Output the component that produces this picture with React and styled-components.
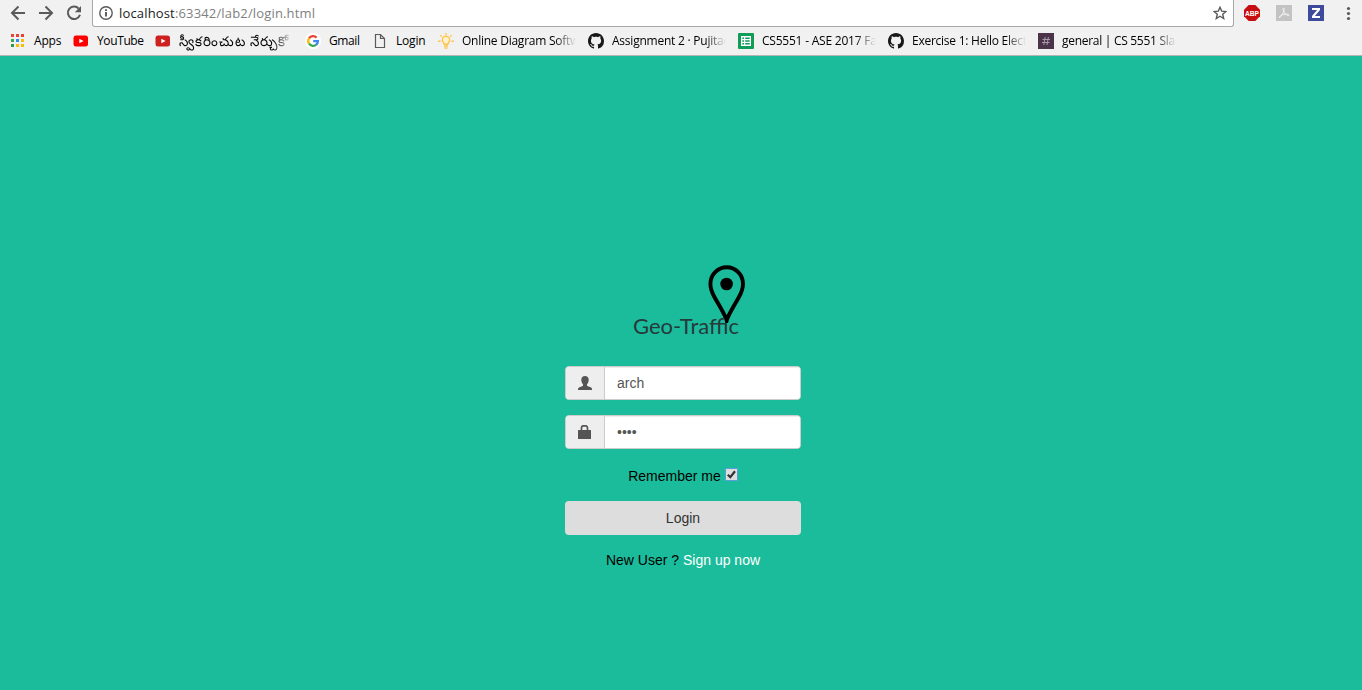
import React from 'react';
import styled, { createGlobalStyle } from 'styled-components';

const GlobalStyle = createGlobalStyle`
  *, *::before, *::after { box-sizing: border-box; }
  body { margin: 0; background: #1bbc9b; }
`;

const Window = styled.div`
  display: flex;
  flex-direction: column;
  height: 690px;
  overflow: hidden;
  font-family: "Liberation Sans", Arial, sans-serif;
`;

const Chrome = styled.header`
  display: flex;
  flex-direction: column;
  height: 56px;
  background: #f1f1f1;
  border-bottom: 1px solid #b3b5b4;
  font-family: "Open Sans", "Noto Sans", sans-serif;
`;

const Toolbar = styled.div`
  display: flex;
  height: 27px;
`;

const NavButtons = styled.div`
  display: flex;
  gap: 12px;
  width: 92px;
  padding: 5px 0 0 10px;
  svg { display: block; }
`;

const AddressBar = styled.div`
  display: flex;
  align-items: center;
  width: 1142px;
  height: 27px;
  padding: 0 6px;
  background: #fff;
  border: 1px solid #a9a9a9;
  border-top: 0;
  border-radius: 0 0 3px 3px;
`;

const Url = styled.span`
  flex: 1;
  margin-left: 6px;
  font-size: 13px;
  line-height: 18px;
  letter-spacing: 0.16px;
  color: #808080;
  b { font-weight: 400; color: #222; }
`;

const Extensions = styled.div`
  display: flex;
  gap: 16px;
  padding: 5px 0 0 10px;
  svg { display: block; }
`;

const BookmarkBar = styled.nav`
  display: flex;
  align-items: center;
  gap: 12px;
  height: 28px;
  padding-left: 10px;
`;

const Bookmark = styled.div`
  display: flex;
  align-items: center;
  gap: 8px;
  svg { display: block; flex: none; }
`;

const BookmarkLabel = styled.span`
  width: ${(p) => p.$width}px;
  white-space: nowrap;
  font-size: ${(p) => p.$size || 12}px;
  line-height: 20px;
  letter-spacing: ${(p) => p.$spacing}px;
  color: #000;
  ${(p) => p.$fade && 'mask-image: linear-gradient(to right, #000 82%, transparent 100%);'}
`;

const Page = styled.main`
  flex: 1;
  display: flex;
  flex-direction: column;
  align-items: center;
  padding: 206px 0 0 4px;
  background: #1bbc9b;
  font-size: 14px;
  line-height: 20px;
  color: #000;
`;

const Brand = styled.div`
  display: flex;
  flex-direction: column;
  align-items: center;
  width: 236px;
  height: 104px;
`;

const PinHolder = styled.div`
  height: 50px;
  padding: 3px 0 0 87px;
  svg { display: block; }
`;

const Title = styled.h1`
  margin: 0 0 0 6px;
  font: 400 22px/28px Lato, sans-serif;
  color: #26393b;
`;

const Form = styled.form`
  display: flex;
  flex-direction: column;
  align-items: center;
  width: 236px;
`;

const InputGroup = styled.div`
  display: flex;
  width: 236px;
  height: 34px;
  margin-bottom: 15px;
  border: 1px solid #ccc;
  border-radius: 4px;
  overflow: hidden;
  background: #fff;
`;

const Addon = styled.span`
  display: flex;
  align-items: center;
  justify-content: center;
  width: 39px;
  border-right: 1px solid #ccc;
  background: #eee;
`;

const Field = styled.input`
  flex: 1;
  min-width: 0;
  padding: 0 12px;
  border: 0;
  outline: 0;
  background: #fff;
  box-shadow: inset 0 1px 1px rgba(0, 0, 0, 0.075);
  font: 14px/20px "Liberation Sans", Arial, sans-serif;
  color: #555;
`;

const Remember = styled.label`
  display: flex;
  gap: 4px;
  margin-top: 2px;
  height: 35px;
`;

const Check = styled.span`
  display: flex;
  align-items: center;
  justify-content: center;
  width: 13px;
  height: 13px;
  margin-top: 2px;
  border: 1px solid #5a9ddb;
  border-radius: 1px;
  background: #dedede;
`;

const LoginButton = styled.button`
  width: 236px;
  height: 34px;
  padding: 0;
  border: 0;
  border-radius: 4px;
  background: #ddd;
  font: 14px/20px "Liberation Sans", Arial, sans-serif;
  color: #333;
`;

const SignUp = styled.p`
  margin: 15px 0 0;
  a { color: #fff; text-decoration: none; }
`;

const strokeProps = { fill: 'none', stroke: '#5a5a5a', strokeWidth: 2 };

const Back = () => (
  <svg width="16" height="16" viewBox="0 0 16 16" {...strokeProps}>
    <path d="M15 8H2.5M8.5 1.5 2 8l6.500 6.500" />
  </svg>
);
const Forward = () => (
  <svg width="16" height="16" viewBox="0 0 16 16" {...strokeProps}>
    <path d="M1 8h12.500M7.500 1.500 14 8l-6.500 6.500" />
  </svg>
);
const Reload = () => (
  <svg width="16" height="16" viewBox="0 0 16 16" {...strokeProps}>
    <path d="M12.700 3.600A6.200 6.200 0 1 0 14 9.800" />
    <path d="M15 1v6.200H8.800z" fill="#5a5a5a" stroke="none" />
  </svg>
);
const Info = () => (
  <svg width="14" height="14" viewBox="0 0 14 14" fill="none" stroke="#5a5a5a">
    <circle cx="7" cy="7" r="6.200" strokeWidth="1.400" />
    <path d="M7 6v4.500M7 3.300v1.700" strokeWidth="1.900" />
  </svg>
);
const Star = () => (
  <svg width="14" height="14" viewBox="0 0 14 14" fill="none" stroke="#5a5a5a" strokeWidth="1.400">
    <path d="M7 1.300 8.700 5.100l4.200.4-3.200 2.700 1 4.300L7 10.200l-3.700 2.300 1-4.300L1.100 5.500l4.200-.4z" />
  </svg>
);
const AdBlock = () => (
  <svg width="16" height="16" viewBox="0 0 16 16">
    <path d="M4.700 0h6.600L16 4.700v6.600L11.300 16H4.700L0 11.300V4.700z" fill="#c70d10" />
    <text x="8" y="10.800" textAnchor="middle" fontSize="7.500" fontWeight="700" fill="#fff" fontFamily="Liberation Sans" textLength="14" lengthAdjust="spacingAndGlyphs">ABP</text>
  </svg>
);
const Acrobat = () => (
  <svg width="16" height="16" viewBox="0 0 16 16">
    <rect width="16" height="16" fill="#c3c3c3" />
    <path d="M7.500 3c1.500 0 .4 4-1 6-1 2-2.600 4-3.400 3.600C2.500 11.500 6 9.500 9 9.200c2.500-.2 4.200.2 4 1.100-.4 1.100-3.500-.8-4.700-2.700C7.200 6 6.600 3 7.500 3z" fill="none" stroke="#f4f4f4" />
  </svg>
);
const ZExtension = () => (
  <svg width="16" height="16" viewBox="0 0 16 16">
    <rect width="16" height="16" fill="#3e4b9b" />
    <path d="M4 3h8v1.900L6.900 11H12v2H4v-1.900L9.100 5H4z" fill="#fff" />
  </svg>
);
const Menu = () => (
  <svg width="16" height="16" viewBox="0 0 16 16" fill="#5a5a5a">
    <circle cx="8.500" cy="3.500" r="1.600" />
    <circle cx="8.500" cy="8.500" r="1.600" />
    <circle cx="8.500" cy="13.500" r="1.600" />
  </svg>
);

const AppsGrid = () => {
  const colors = ['#ea4335', '#ea4335', '#ea4335', '#34a853', '#2f8cf0', '#fbbc05', '#2e9b50', '#fbbc05', '#fbbc05'];
  return (
    <svg width="16" height="16" viewBox="0 0 16 16">
      {colors.map((c, i) => (
        <rect key={i} x={1 + (i % 3) * 5} y={1 + Math.floor(i / 3) * 5} width="3" height="3" fill={c} />
      ))}
    </svg>
  );
};
const Tube = ({ color }) => (
  <svg width="16" height="16" viewBox="0 0 16 16">
    <rect x="0.500" y="2.500" width="14.500" height="11" rx="2.500" fill={color} />
    <path d="M6.300 5.700 10.600 8l-4.300 2.300z" fill="#fff" />
  </svg>
);
const Google = () => (
  <svg width="16" height="16" viewBox="0 0 16 16">
    <circle cx="8" cy="8" r="8" fill="#fff" />
    <g fill="none" strokeWidth="2.300">
      <path d="M4 5.300A4.900 4.900 0 0 1 11.600 4.600" stroke="#ea4335" />
      <path d="M4 10.700a4.900 4.900 0 0 1 0-5.400" stroke="#fbbc05" />
      <path d="M11.400 11.500A4.900 4.900 0 0 1 4 10.700" stroke="#34a853" />
      <path d="M8.200 8.200h4.700a4.900 4.900 0 0 1-1.600 3.400" stroke="#4285f4" />
    </g>
  </svg>
);
const Document = () => (
  <svg width="16" height="16" viewBox="0 0 16 16" fill="none" stroke="#5a5a5a" strokeWidth="1.200">
    <path d="M3.500 1.500h5l4 4v9h-9zM8.500 1.500v4h4" />
  </svg>
);
const Bulb = () => (
  <svg width="16" height="16" viewBox="0 0 16 16" fill="none" stroke="#ffc44d" strokeWidth="1.400">
    <path d="M6.200 11.200c0-1.500-1.900-2.100-1.900-4.300a3.700 3.700 0 0 1 7.400 0c0 2.200-1.900 2.800-1.900 4.300z" fill="#fff3cf" />
    <path d="M6 13h4M6.500 15h3M8 0v1.800M2.300 2.200l1.300 1.200M13.700 2.200l-1.300 1.200M0 8.300h2.500M13.500 8.300H16" />
  </svg>
);
const GitHub = () => (
  <svg width="16" height="16" viewBox="0 0 16 16" fill="#191717">
    <path d="M8 0C3.580 0 0 3.580 0 8c0 3.540 2.290 6.530 5.470 7.590.4.070.55-.17.55-.38 0-.19-.01-.82-.01-1.490-2.010.37-2.530-.49-2.690-.94-.09-.23-.48-.94-.82-1.130-.28-.15-.68-.52-.01-.53.63-.01 1.080.58 1.230.82.72 1.210 1.870.87 2.330.66.07-.52.28-.87.51-1.070-1.780-.2-3.640-.89-3.640-3.950 0-.87.31-1.590.82-2.150-.08-.2-.36-1.020.08-2.120 0 0 .67-.21 2.200.82.64-.18 1.320-.27 2-.27s1.360.09 2 .27c1.530-1.040 2.200-.82 2.200-.82.44 1.100.16 1.920.08 2.120.51.56.82 1.270.82 2.150 0 3.070-1.870 3.750-3.650 3.950.29.25.54.73.54 1.480 0 1.070-.01 1.930-.01 2.200 0 .21.15.46.55.38A8.010 8.010 0 0 0 16 8c0-4.420-3.580-8-8-8z" />
  </svg>
);
const Sheet = () => (
  <svg width="16" height="16" viewBox="0 0 16 16">
    <rect width="16" height="16" rx="1" fill="#0f9d58" />
    <path d="M3 3h10v10H3z" fill="#fff" />
    <path d="M4.300 5.200h1.700M7.200 5.200h4.500M4.300 8h1.700M7.200 8h4.500M4.300 10.800h1.700M7.200 10.800h4.500" stroke="#0f9d58" strokeWidth="1.500" />
  </svg>
);
const Slack = () => (
  <svg width="16" height="16" viewBox="0 0 16 16">
    <rect width="16" height="16" fill="#4b3349" />
    <path d="M7.200 4 5.800 12M10.400 4 9 12M4.500 6.500h7.500M4 9.500h7.500" stroke="#a899a7" fill="none" />
  </svg>
);

const Pin = () => (
  <svg width="38" height="58" viewBox="0 0 38 58">
    <path d="M18.700 55.500C17.200 50 11.700 41.500 6.700 32.500 3.500 26.800 2.400 23.500 2.400 19a16.300 16.800 0 0 1 32.600 0c0 4.500-1.100 7.800-4.300 13.500-5 9-10.500 17.500-12 23z" fill="none" stroke="#000" strokeWidth="3.900" />
    <circle cx="18.600" cy="19" r="6.300" />
  </svg>
);
const User = () => (
  <svg width="14" height="14" viewBox="0 0 14 14" fill="#555">
    <path d="M7 0c2.300 0 3.700 1.400 3.700 3.700 0 1.900-.7 3.600-1.700 4.500v1.200c.3.600 1.700 1 3.100 1.700 1.500.6 2 1.200 2 2.900H0c0-1.700.5-2.300 2-2.900 1.500-.7 2.700-1.100 3-1.700V8.200C4 7.300 3.300 5.600 3.300 3.700 3.300 1.400 4.700 0 7 0z" />
  </svg>
);
const Lock = () => (
  <svg width="16" height="14" viewBox="0 0 16 14" fill="#555">
    <path d="M1.500 5h12q.5 0 .5.500v8q0 .5-.5.500h-12q-.5 0-.5-.500v-8Q1 5 1.500 5z" />
    <path d="M4.500 5.500V3Q4.500.8 6.500.8h2q2 0 2 2.200v2.500" fill="none" stroke="#555" strokeWidth="1.700" />
  </svg>
);

const bookmarks = [
  { icon: <AppsGrid />, label: 'Apps', width: 27, spacing: -0.2 },
  { icon: <Tube color="#f00" />, label: 'YouTube', width: 46, spacing: -0.38 },
  { icon: <Tube color="#cd201f" />, label: 'స్వీకరించుట నేర్చుకో', width: 114, size: 13.4, spacing: 0.9, fade: true },
  { icon: <Google />, label: 'Gmail', width: 31, spacing: -0.4 },
  { icon: <Document />, label: 'Login', width: 30, spacing: -0.2 },
  { icon: <Bulb />, label: 'Online Diagram Softw', width: 114, spacing: -0.25, fade: true },
  { icon: <GitHub />, label: 'Assignment 2 · Pujitac', width: 114, spacing: -0.23, fade: true },
  { icon: <Sheet />, label: 'CS5551 - ASE 2017 Fa', width: 114, spacing: -0.22, fade: true },
  { icon: <GitHub />, label: 'Exercise 1: Hello Elect', width: 114, spacing: -0.25, fade: true },
  { icon: <Slack />, label: 'general | CS 5551 Slac', width: 114, spacing: -0.29, fade: true },
];

export default function App() {
  return (
    <Window>
      <GlobalStyle />
      <Chrome>
        <Toolbar>
          <NavButtons><Back /><Forward /><Reload /></NavButtons>
          <AddressBar>
            <Info />
            <Url><b>localhost</b>:63342/lab2/login.html</Url>
            <Star />
          </AddressBar>
          <Extensions><AdBlock /><Acrobat /><ZExtension /><Menu /></Extensions>
        </Toolbar>
        <BookmarkBar>
          {bookmarks.map((b, i) => (
            <Bookmark key={i}>
              {b.icon}
              <BookmarkLabel $width={b.width} $size={b.size} $spacing={b.spacing} $fade={b.fade}>{b.label}</BookmarkLabel>
            </Bookmark>
          ))}
        </BookmarkBar>
      </Chrome>
      <Page>
        <Brand>
          <PinHolder><Pin /></PinHolder>
          <Title>Geo-Traffic</Title>
        </Brand>
        <Form onSubmit={(e) => e.preventDefault()}>
          <InputGroup>
            <Addon><User /></Addon>
            <Field type="text" defaultValue="arch" />
          </InputGroup>
          <InputGroup>
            <Addon><Lock /></Addon>
            <Field type="password" defaultValue="arch" />
          </InputGroup>
          <Remember>
            Remember me
            <Check>
              <svg width="9" height="9" viewBox="0 0 9 9" fill="none" stroke="#333" strokeWidth="2.200">
                <path d="M.8 4.800 3.300 7.200 8 1.200" />
              </svg>
            </Check>
          </Remember>
          <LoginButton>Login</LoginButton>
          <SignUp>New User ? <a href="#signup">Sign up now</a></SignUp>
        </Form>
      </Page>
    </Window>
  );
}
